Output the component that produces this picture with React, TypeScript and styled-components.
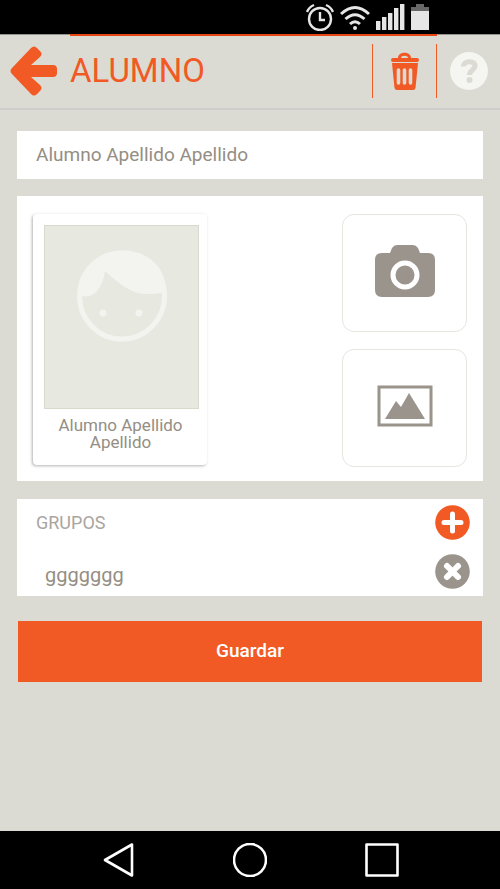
import React from "react";
import styled, { createGlobalStyle } from "styled-components";

const color = {
  page: "#dbdbd3",
  orange: "#f15a24",
  gray: "#9a948c",
  text: "#948e84",
  line: "#cdcdcb",
  frame: "#e7e8e0",
  face: "#f3f4ef",
};

const GlobalStyle = createGlobalStyle`
  * { box-sizing: border-box; }
  body {
    margin: 0;
    background: ${color.page};
    color: ${color.text};
    font-family: Roboto, "Liberation Sans", sans-serif;
  }
  button, input { font: inherit; color: inherit; }
`;

const Screen = styled.div`
  display: flex;
  flex-direction: column;
  min-height: 100vh;
`;

const StatusBar = styled.div`
  display: flex;
  justify-content: flex-end;
  align-items: center;
  gap: 6px;
  height: 34px;
  padding-right: 71px;
  background: #000;
`;

const Header = styled.header`
  display: flex;
  height: 76px;
  border-bottom: 2px solid ${color.line};
`;

const IconButton = styled.button`
  display: flex;
  align-items: center;
  justify-content: center;
  padding: 0;
  border: 0;
  background: none;
  cursor: pointer;
`;

const BackButton = styled(IconButton)`
  width: 70px;
  padding: 0 2px 2px 0;
  border-top: 1px solid #92928e;
`;

const HelpButton = styled(IconButton)`
  width: 63px;
  padding-bottom: 2px;
  border-top: 1px solid #92928e;
`;

const HeaderMain = styled.div`
  display: flex;
  flex: 1;
  align-items: center;
  justify-content: space-between;
  padding-bottom: 2px;
  border-top: 2px solid #e84713;
`;

const Title = styled.h1`
  margin: 0;
  color: ${color.orange};
  font-size: 33px;
  font-weight: 400;
  line-height: 40px;
`;

const TrashButton = styled(IconButton)`
  width: 65px;
  height: 54px;
  border: solid ${color.orange};
  border-width: 0 1px;
`;

const Form = styled.form`
  display: flex;
  flex: 1;
  flex-direction: column;
  padding: 21px 17px 24px;
`;

const NameInput = styled.input`
  width: 100%;
  height: 48px;
  padding: 0 19px 2px;
  border: 0;
  border-radius: 0;
  background: #fff;
  font-size: 19px;
`;

const PhotoPanel = styled.section`
  display: flex;
  justify-content: space-between;
  margin-top: 17px;
  padding: 18px 16px 14px;
  background: #fff;
`;

const PhotoCard = styled.figure`
  width: 174px;
  height: 251px;
  margin: 0;
  padding: 11px 8px 0 11px;
  border-radius: 4px;
  background: #fff;
  box-shadow: -1px 1px 3px rgba(0, 0, 0, 0.3);
`;

const Portrait = styled.div`
  display: flex;
  justify-content: center;
  height: 184px;
  padding-top: 24px;
  border: 1px solid #d7dacd;
  background: ${color.frame};
`;

const Caption = styled.figcaption`
  padding: 8px 10px 0 8px;
  font-size: 17px;
  line-height: 17px;
  text-align: center;
`;

const Sources = styled.div`
  display: flex;
  flex-direction: column;
  gap: 17px;
`;

const SourceButton = styled(IconButton)`
  width: 125px;
  height: 118px;
  padding-bottom: 4px;
  border: 1px solid #e6e6df;
  border-radius: 12px;
`;

const Groups = styled.section`
  margin-top: 18px;
  background: #fff;
`;

const GroupRow = styled.div<{ $inset?: boolean }>`
  display: flex;
  align-items: center;
  justify-content: space-between;
  height: ${(p) => (p.$inset ? 50 : 47)}px;
  padding-right: 13px;
  padding-left: ${(p) => (p.$inset ? 28 : 19)}px;
`;

const GroupsTitle = styled.h2`
  margin: 0;
  color: #aaa59f;
  font-size: 18px;
  font-weight: 400;
`;

const GroupName = styled.span`
  padding-top: 8px;
  font-size: 20px;
`;

const SaveButton = styled.button`
  height: 61px;
  margin: 25px 1px 0;
  padding: 0 0 2px;
  border: 0;
  background: ${color.orange};
  color: #fff;
  font-size: 19px;
  font-weight: 500;
  cursor: pointer;
`;

const NavBar = styled.nav`
  display: flex;
  align-items: center;
  justify-content: center;
  gap: 98px;
  height: 58px;
  background: #000;
`;

function StatusIcons() {
  return (
    <>
      <svg width="28" height="28" viewBox="0 0 28 28" fill="none" stroke="#e6e6e6" strokeWidth="2.4">
        <circle cx="14" cy="16" r="11" />
        <path d="M14 9v8h5M1 9Q3 4 8 2M27 9Q25 4 20 2" />
      </svg>
      <svg width="30" height="28" viewBox="0 0 30 28" fill="none" stroke="#e6e6e6" strokeWidth="3">
        <path d="M1 11Q15-2 29 11M5.500 16Q15 7.500 24.500 16M10 21Q15 16.500 20 21" />
        <circle cx="15" cy="25" r="2" fill="#e6e6e6" stroke="none" />
      </svg>
      <svg width="29" height="28" viewBox="0 0 29 28" fill="#e6e6e6">
        <path d="M0 18h4.400v9H0zM6 14h4.400v13H6zM12 10h4.400v17h-4.400zM18 5h4.400v22h-4.400zM24 1h4.400v26h-4.400z" />
      </svg>
      <svg width="18" height="28" viewBox="0 0 18 28">
        <path d="M0 4h5V1h8v3h5v4H0z" fill="#686868" />
        <path d="M0 8h18v19H0z" fill="#e6e6e6" />
      </svg>
    </>
  );
}

function BackIcon() {
  return (
    <svg width="48" height="50" viewBox="0 0 48 50" fill={color.orange}>
      <path d="M21 2Q24-1 27 2L30 5Q33 8 30 11L21 19H43Q47 19 47 23V27Q47 31 43 31H21L30 39Q33 42 30 45L27 48Q24 51 21 48L2 28Q-1 25 2 22Z" />
    </svg>
  );
}

function TrashIcon() {
  return (
    <svg width="28" height="38" viewBox="0 0 28 38" fill={color.orange}>
      <path d="M7 6C7-1 20-1 20 6H26Q28 6 28 8T26 10H2Q0 10 0 8T2 6ZM10 6H17C17 3 10 3 10 6Z" />
      <path d="M1 11H27L24.500 36Q24 38 22 38H6Q4 38 3.500 36Z" />
      <path d="M7.500 18V31M13.500 18V31M19.500 18V31" stroke={color.page} strokeWidth="3.600" strokeLinecap="round" />
    </svg>
  );
}

function HelpIcon() {
  return (
    <svg width="38" height="38" viewBox="0 0 38 38" fill="none">
      <circle cx="19" cy="19" r="19" fill="#f5f5f1" />
      <path d="M13.500 14.500C13 8.500 25 8 25 14C25 18 19.500 18 19.500 23" stroke={color.page} strokeWidth="5" />
      <circle cx="19.500" cy="28" r="3" fill={color.page} />
    </svg>
  );
}

function FaceIcon() {
  return (
    <svg width="90" height="92" viewBox="0 0 90 92">
      <ellipse cx="45" cy="46" rx="42.500" ry="43" fill="none" stroke={color.face} strokeWidth="5" />
      <path d="M1 46C1-14 89-14 89 42C60 48 50 41 28 21C26 36 18 49 5 46Z" fill={color.face} />
      <circle cx="26" cy="63" r="3.500" fill={color.face} />
      <circle cx="62" cy="63" r="3.500" fill={color.face} />
    </svg>
  );
}

function CameraIcon() {
  return (
    <svg width="62" height="54" viewBox="0 0 62 54">
      <path d="M8 9H16L18 4Q20 1 23 1H39Q42 1 44 4L46 9H54Q61 9 61 16V46Q61 53 54 53H8Q1 53 1 46V16Q1 9 8 9Z" fill={color.gray} />
      <circle cx="31" cy="31" r="12" fill={color.gray} stroke="#fff" strokeWidth="5" />
    </svg>
  );
}

function PictureIcon() {
  return (
    <svg width="56" height="42" viewBox="0 0 56 42">
      <rect x="2" y="2" width="52" height="38" fill="none" stroke={color.gray} strokeWidth="3" />
      <path d="M8 34L19 16L24 22L32 8L48 34Z" fill={color.gray} />
    </svg>
  );
}

function RoundIcon({ fill, path, stroke }: { fill: string; path: string; stroke: number }) {
  return (
    <svg width="35" height="35" viewBox="0 0 35 35">
      <circle cx="17.500" cy="17.500" r="17.300" fill={fill} />
      <path d={path} stroke="#fff" strokeWidth={stroke} strokeLinecap="round" />
    </svg>
  );
}

const navShapes = [
  { label: "Atrás", d: "M31 1.500V32.500L4 17Z" },
  { label: "Inicio", d: "M17 1A16 16 0 0 1 17 33A16 16 0 0 1 17 1Z" },
  { label: "Recientes", d: "M1.500 1.500H32.500V32.500H1.500Z" },
];

export default function App() {
  const [name, setName] = React.useState("Alumno Apellido Apellido");
  const [groups, setGroups] = React.useState(["ggggggg"]);

  return (
    <Screen>
      <GlobalStyle />
      <StatusBar>
        <StatusIcons />
      </StatusBar>
      <Header>
        <BackButton type="button" aria-label="Volver">
          <BackIcon />
        </BackButton>
        <HeaderMain>
          <Title>ALUMNO</Title>
          <TrashButton type="button" aria-label="Eliminar">
            <TrashIcon />
          </TrashButton>
        </HeaderMain>
        <HelpButton type="button" aria-label="Ayuda">
          <HelpIcon />
        </HelpButton>
      </Header>
      <Form onSubmit={(e) => e.preventDefault()}>
        <NameInput aria-label="Nombre" value={name} onChange={(e) => setName(e.target.value)} />
        <PhotoPanel>
          <PhotoCard>
            <Portrait>
              <FaceIcon />
            </Portrait>
            <Caption>{name}</Caption>
          </PhotoCard>
          <Sources>
            <SourceButton type="button" aria-label="Cámara">
              <CameraIcon />
            </SourceButton>
            <SourceButton type="button" aria-label="Galería">
              <PictureIcon />
            </SourceButton>
          </Sources>
        </PhotoPanel>
        <Groups>
          <GroupRow>
            <GroupsTitle>GRUPOS</GroupsTitle>
            <IconButton type="button" aria-label="Añadir grupo">
              <RoundIcon fill={color.orange} path="M17.500 9V26M9 17.500H26" stroke={5} />
            </IconButton>
          </GroupRow>
          {groups.map((group) => (
            <GroupRow $inset key={group}>
              <GroupName>{group}</GroupName>
              <IconButton
                type="button"
                aria-label={`Quitar ${group}`}
                onClick={() => setGroups(groups.filter((g) => g !== group))}
              >
                <RoundIcon fill={color.gray} path="M12 12L23 23M23 12L12 23" stroke={6} />
              </IconButton>
            </GroupRow>
          ))}
        </Groups>
        <SaveButton type="submit">Guardar</SaveButton>
      </Form>
      <NavBar>
        {navShapes.map((shape) => (
          <IconButton type="button" aria-label={shape.label} key={shape.label}>
            <svg width="34" height="34" viewBox="0 0 34 34" fill="none" stroke="#fff" strokeWidth="2.600" strokeLinejoin="round">
              <path d={shape.d} />
            </svg>
          </IconButton>
        ))}
      </NavBar>
    </Screen>
  );
}
